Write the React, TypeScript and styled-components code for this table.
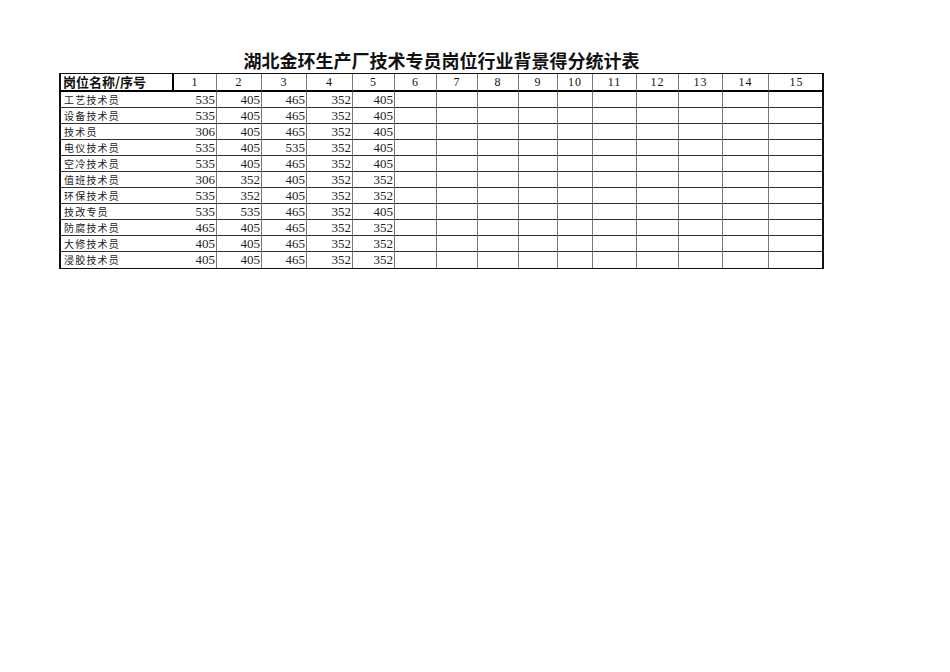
import React, { FC } from "react";
import styled, { createGlobalStyle } from "styled-components";

const GlobalStyle = createGlobalStyle`
  html, body {
    margin: 0;
    padding: 0;
    background: #fff;
  }
`;

const widths = [113, 43, 45, 45, 46, 42, 42, 41, 41, 39, 35, 44, 42, 44, 46, 55];

const rows: [string, number[]][] = [
  ["工艺技术员", [535, 405, 465, 352, 405]],
  ["设备技术员", [535, 405, 465, 352, 405]],
  ["技术员", [306, 405, 465, 352, 405]],
  ["电仪技术员", [535, 405, 535, 352, 405]],
  ["空冷技术员", [535, 405, 465, 352, 405]],
  ["值班技术员", [306, 352, 405, 352, 352]],
  ["环保技术员", [535, 352, 405, 352, 352]],
  ["技改专员", [535, 535, 465, 352, 405]],
  ["防腐技术员", [465, 405, 465, 352, 352]],
  ["大修技术员", [405, 405, 465, 352, 352]],
  ["浸胶技术员", [405, 405, 465, 352, 352]],
];

const Page = styled.div`
  width: 950px;
  height: 672px;
  padding-top: 48px;
  box-sizing: border-box;
`;

const Title = styled.div`
  width: 763px;
  margin-left: 60px;
  height: 25px;
  line-height: 24px;
  text-align: center;
  font-family: "Noto Sans CJK SC", sans-serif;
  font-weight: 700;
  font-size: 18px;
  letter-spacing: 0;
  color: #111;
`;

const Sheet = styled.div`
  margin-left: 59px;
  width: 765px;
  display: grid;
  grid-template-columns: ${widths.map((w) => `${w}px`).join(" ")};
  border-left: 2px solid #111;
  border-right: 2px solid #111;
  border-top: 1px solid #111;
  border-bottom: 1px solid #111;
  box-sizing: border-box;
  & > :nth-child(1) {
    margin-left: -1px;
  }
`;

const HeadCell = styled.div<{ $first?: boolean }>`
  height: 18px;
  box-sizing: border-box;
  border-bottom: 2px solid #000;
  border-right: ${(p) => (p.$first ? "2px solid #000" : "1px solid #777")};
  font-family: ${(p) =>
    p.$first ? `"Noto Sans CJK SC", sans-serif` : `"Liberation Serif", serif`};
  font-weight: ${(p) => (p.$first ? 700 : 400)};
  font-size: ${(p) => (p.$first ? "13px" : "12px")};
  letter-spacing: ${(p) => (p.$first ? "0" : "1px")};
  line-height: 16px;
  text-align: ${(p) => (p.$first ? "left" : "center")};
  padding-left: ${(p) => (p.$first ? "2px" : "0")};
  color: #111;
  &:last-child {
    border-right: none;
  }
`;

const HeadRow = styled.div`
  display: contents;
`;

const LabelCell = styled.div`
  box-sizing: border-box;
  border-bottom: 1px solid #333;
  font-family: "Noto Sans CJK SC", sans-serif;
  font-size: 10px;
  letter-spacing: 1.2px;
  line-height: 15px;
  padding-left: 3px;
  color: #222;
`;

const Cell = styled.div`
  box-sizing: border-box;
  border-bottom: 1px solid #333;
  border-right: 1px solid #777;
  font-family: "Liberation Serif", serif;
  font-size: 13px;
  line-height: 16px;
  text-align: right;
  padding-right: 1px;
  color: #222;
  &:last-child {
    border-right: none;
  }
`;

const Row = styled.div`
  display: contents;
  &:last-child > * {
    border-bottom: none;
  }
`;

const App: FC = () => {
  return (
    <Page>
      <GlobalStyle />
      <Title>湖北金环生产厂技术专员岗位行业背景得分统计表</Title>
      <Sheet style={{ gridTemplateRows: `18px repeat(${rows.length}, 16px)` }}>
        <HeadRow>
          <HeadCell $first>岗位名称/序号</HeadCell>
          {widths.slice(1).map((_, i) => (
            <HeadCell key={i}>{i + 1}</HeadCell>
          ))}
        </HeadRow>
        {rows.map(([label, values]) => (
          <Row key={label}>
            <LabelCell>{label}</LabelCell>
            {widths.slice(1).map((_, i) => (
              <Cell key={i}>{values[i] ?? ""}</Cell>
            ))}
          </Row>
        ))}
      </Sheet>
    </Page>
  );
};

export default App;
